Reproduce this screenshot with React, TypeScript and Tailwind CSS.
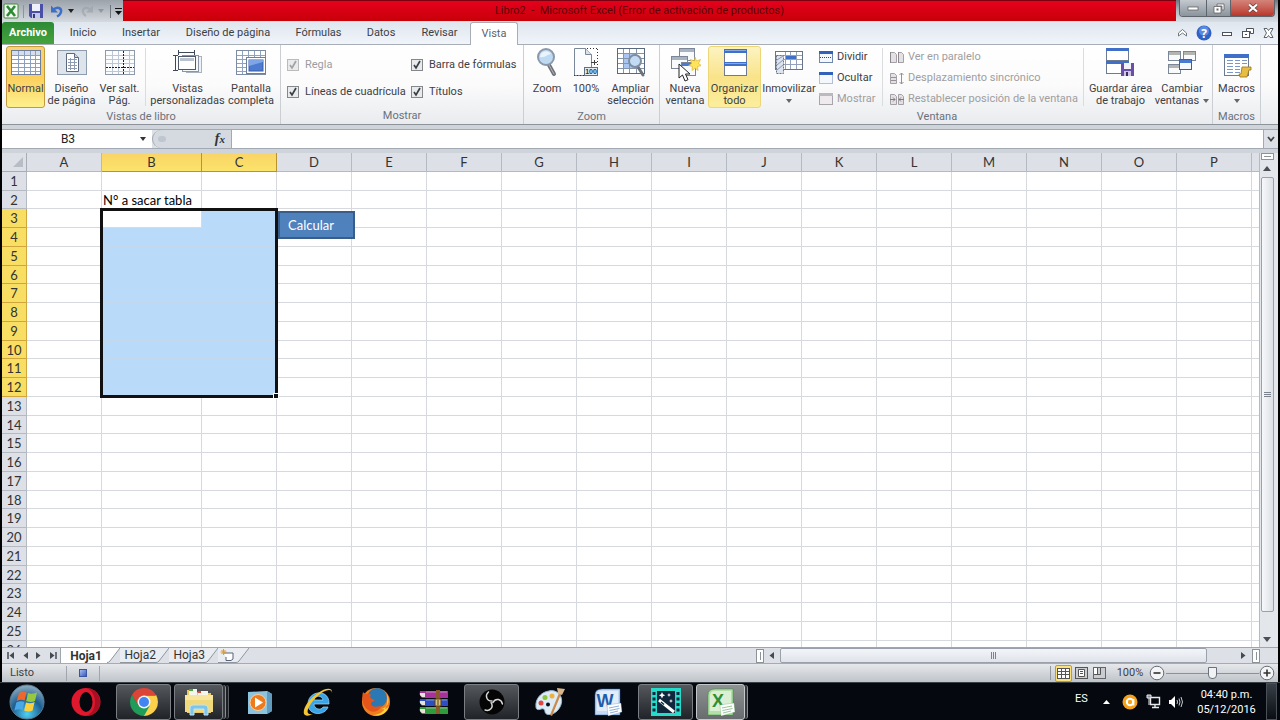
import { type ReactNode } from 'react'
import clsx from 'clsx'

// ============================================================
// Data
// ============================================================

const MENUS = [
  { label: 'Inicio', width: 'w-[56px]' },
  { label: 'Insertar', width: 'w-[60px]' },
  { label: 'Diseño de página', width: 'w-[114px]' },
  { label: 'Fórmulas', width: 'w-[67px]' },
  { label: 'Datos', width: 'w-[58px]' },
  { label: 'Revisar', width: 'w-[59px]' },
]

const COLUMNS = ['A', 'B', 'C', 'D', 'E', 'F', 'G', 'H', 'I', 'J', 'K', 'L', 'M', 'N', 'O', 'P']
const ROWS = Array.from({ length: 26 }, (_, i) => i + 1)

const isSelected = (col: string, row: number) => (col === 'B' || col === 'C') && row >= 3 && row <= 12

// ============================================================
// Ribbon icons
// ============================================================

function GridIcon() {
  return (
    <svg width="32" height="32" viewBox="0 0 32 32">
      <rect x="1.5" y="3.5" width="29" height="24" fill="#fff" stroke="#6d7f9b" />
      <rect x="2" y="4" width="28" height="4" fill="#d5deea" />
      <path d="M2 8.5h28M2 12.5h28M2 16.5h28M2 20.5h28M2 24.5h28M8.5 4v23M14.5 4v23M20.5 4v23M25.5 4v23" stroke="#8ba0c0" fill="none" />
    </svg>
  )
}

function PageLayoutIcon() {
  return (
    <svg width="32" height="32" viewBox="0 0 32 32">
      <rect x="1.5" y="3.5" width="29" height="24" fill="#dde4ec" stroke="#8e9cb0" />
      <path d="M10.5 6.5h8l4 4v14h-12z" fill="#fff" stroke="#5c6a80" />
      <path d="M18.5 6.5v4h4" fill="#c9d4e2" stroke="#5c6a80" />
      <path d="M12 12.5h9M12 15.5h9M12 18.5h9M12 21.5h9M14.5 11v12M18.5 11v12" stroke="#8d9cb4" />
    </svg>
  )
}

function PageBreakIcon() {
  return (
    <svg width="32" height="32" viewBox="0 0 32 32">
      <rect x="1.5" y="3.5" width="29" height="24" fill="#fbfcfd" stroke="#8e99ab" />
      <path d="M2 8.5h28M2 12.5h28M2 16.5h28M2 24.5h28M8.5 4v23M14.5 4v23M25.5 4v23" stroke="#bcc6d4" />
      <path d="M19.5 4v24M2 20.5h28" stroke="#222" strokeDasharray="2 1" />
    </svg>
  )
}

function CustomViewsIcon() {
  return (
    <svg width="32" height="32" viewBox="0 0 32 32">
      <rect x="14.5" y="9.5" width="15" height="16" fill="#eef1f5" stroke="#a8b2c0" />
      <rect x="10.5" y="8.5" width="16" height="16" fill="#f6f8fa" stroke="#8a95a6" />
      <rect x="6.5" y="9.5" width="17" height="13" fill="#fff" stroke="#4e5a6c" />
      <rect x="8" y="11" width="14" height="3" fill="#b9c2ce" />
      <path d="M6 5.5h17M6.5 3v5M22.5 3v5M3.5 9v14M1 8.5h5M1 23.5h5" stroke="#3f4858" />
    </svg>
  )
}

function FullScreenIcon() {
  return (
    <svg width="32" height="32" viewBox="0 0 32 32">
      <rect x="1.5" y="3.5" width="29" height="24" fill="#fff" stroke="#7c8ca4" />
      <path d="M2 8.5h28M2 12.5h28M2 16.5h28M2 20.5h28M2 24.5h28M7.5 4v23M13.5 4v23M19.5 4v23M25.5 4v23" stroke="#8fa2be" />
      <rect x="11.5" y="10.5" width="19" height="16" fill="#fff" stroke="#6c7f9f" />
      <rect x="14" y="13" width="14" height="11" fill="#4c7bd0" stroke="#3a5fa8" />
      <path d="M14 19l14-4v-2H14z" fill="#7fa5e6" />
    </svg>
  )
}

function MagnifierIcon() {
  return (
    <svg width="32" height="32" viewBox="0 0 32 32">
      <path d="M18 18l5 9" stroke="#6f7379" strokeWidth="4" strokeLinecap="round" />
      <path d="M18 18l5 9" stroke="#b3b7bd" strokeWidth="1" strokeLinecap="round" />
      <circle cx="15" cy="10" r="8" fill="#bedaf3" stroke="#8b98a9" strokeWidth="2" />
      <path d="M9 10a6 6 0 0 1 11-3c-3 0-6 4-11 3z" fill="#e9f4fd" />
    </svg>
  )
}

function HundredIcon() {
  return (
    <svg width="32" height="32" viewBox="0 0 32 32">
      <path d="M4.5 1.5h11l6 6v21h-17z" fill="#fbfcfe" stroke="#7a8798" />
      <path d="M15.5 1.5v6h6" fill="#d9e1ec" stroke="#7a8798" />
      <path d="M17 1.5h11M27.5 2v18M4 28.5h24" stroke="#333" strokeDasharray="1 2" />
      <path d="M21 15.5h6M24.5 13v5" stroke="#444" />
      <rect x="14.5" y="20.5" width="13" height="8" fill="#e8edf3" stroke="#5f6f86" />
      <text x="21" y="27" fontSize="7" fontWeight="700" textAnchor="middle" fontFamily="Liberation Sans, sans-serif" fill="#26354d">100</text>
    </svg>
  )
}

function ZoomSelectionIcon() {
  return (
    <svg width="32" height="32" viewBox="0 0 32 32">
      <rect x="2.5" y="1.5" width="27" height="25" fill="#fff" stroke="#59697f" />
      <rect x="9" y="6" width="12" height="15" fill="#a9c6f2" />
      <path d="M3 6.5h26M3 11.5h26M3 16.5h26M3 21.5h26M8.5 2v24M14.5 2v24M21.5 2v24" stroke="#8394ab" />
      <path d="M23 20l5 8" stroke="#6f7379" strokeWidth="3" strokeLinecap="round" />
      <circle cx="20" cy="14" r="6" fill="#c3dcf5" stroke="#7f8da1" strokeWidth="2" />
    </svg>
  )
}

function MiniWindow({ x, y, w, h, bar = '#a9b2bf' }: { x: number; y: number; w: number; h: number; bar?: string }) {
  return (
    <g>
      <rect x={x + 0.5} y={y + 0.5} width={w} height={h} fill="#f8fafc" stroke="#7b8799" />
      <rect x={x + 1} y={y + 1} width={w - 1} height="3" fill={bar} />
    </g>
  )
}

function NewWindowIcon() {
  return (
    <svg width="32" height="32" viewBox="0 0 32 32">
      <MiniWindow x={10} y={1} w={15} h={12} />
      <MiniWindow x={2} y={9} w={16} h={12} />
      <MiniWindow x={12} y={15} w={14} h={13} bar="#4a7ad0" />
      <path d="M26 10l1.5 4 4-1.5-2 4 3 2-4 1 .5 4-3-2.500-3 2.500.5-4-4-1 3-2-1-4 4 1.500z" fill="#ffe45a" stroke="#dcae1c" strokeWidth=".6" />
    </svg>
  )
}

function ArrangeIcon() {
  return (
    <svg width="32" height="32" viewBox="0 0 32 32">
      <rect x="5.5" y="2.5" width="22" height="13" fill="#fff" stroke="#6d7b92" />
      <rect x="5.5" y="15.5" width="22" height="13" fill="#fff" stroke="#6d7b92" />
      <rect x="5" y="2" width="23" height="4" fill="#3f6fc8" />
      <rect x="5" y="15" width="23" height="4" fill="#3f6fc8" />
      <path d="M6 3.5h21M6 16.5h21" stroke="#86aae8" />
    </svg>
  )
}

function FreezeIcon() {
  return (
    <svg width="32" height="32" viewBox="0 0 32 32">
      <rect x="2.5" y="4.5" width="27" height="18" fill="#fff" stroke="#66758c" />
      <path d="M4 8.5h25M4 12.5h25M4 17.5h25M12.5 5v17M17.5 5v17M23.5 5v17" stroke="#93a2b8" />
      <rect x="13" y="9" width="10" height="3" fill="#3f6fc8" />
      <path d="M3.5 8.5h7v18h-7z" fill="#dde4ed" stroke="#66758c" strokeDasharray="2 1" />
      <path d="M4 13l6-4M4 18l6-5M4 23l6-5" stroke="#8796ad" />
    </svg>
  )
}

function SaveWorkspaceIcon() {
  return (
    <svg width="32" height="32" viewBox="0 0 32 32">
      <rect x="1.5" y="1.5" width="22" height="12" fill="#fff" stroke="#6d7b92" />
      <rect x="1.5" y="14.5" width="22" height="12" fill="#fff" stroke="#6d7b92" />
      <rect x="1" y="1" width="23" height="3" fill="#3f6fc8" />
      <rect x="1" y="14" width="23" height="3" fill="#3f6fc8" />
      <rect x="16" y="16" width="13" height="13" fill="#6a4fa8" />
      <rect x="19" y="16" width="7" height="6" fill="#f3f1f8" />
      <rect x="19" y="24" width="7" height="5" fill="#cfc8e0" />
      <rect x="21" y="25" width="2" height="4" fill="#3c2c66" />
    </svg>
  )
}

function SwitchWindowsIcon() {
  return (
    <svg width="32" height="32" viewBox="0 0 32 32">
      <MiniWindow x={2} y={4} w={12} h={9} bar="#b4b4b0" />
      <MiniWindow x={17} y={4} w={12} h={9} bar="#b4b4b0" />
      <MiniWindow x={2} y={17} w={12} h={9} bar="#b4b4b0" />
      <rect x="13.5" y="12.5" width="12" height="10" fill="#f4f8ff" stroke="#3a5fa8" />
      <rect x="14" y="13" width="11" height="3" fill="#4a7ad0" />
    </svg>
  )
}

function MacrosIcon() {
  return (
    <svg width="32" height="32" viewBox="0 0 32 32">
      <rect x="3.5" y="7.5" width="24" height="21" fill="#fff" stroke="#6d7b92" />
      <rect x="3" y="7" width="25" height="4" fill="#3f6fc8" />
      <path d="M6 13.5h6M14 13.5h5M21 13.5h5M6 16.5h6M14 16.5h5M21 16.5h5M6 19.5h6M14 19.5h5M6 22.5h6M14 22.5h5M6 25.5h6M14 25.5h5" stroke="#7c97c6" />
      <path d="M21 20h9v3h-2l-2 7h-7l-1-3h2z" fill="#e8bd43" stroke="#9a7415" strokeWidth=".8" />
    </svg>
  )
}

function SplitIcon({ kind }: { kind: 'split' | 'hide' | 'show' }) {
  const off = kind === 'show'
  return (
    <svg width="16" height="14" viewBox="0 0 16 14">
      <rect x="1.5" y="1.5" width="13" height="11" fill={off ? '#eeeaee' : '#f4f8fd'} stroke={off ? '#a9a4a9' : '#6f86ad'} strokeDasharray={kind === 'hide' ? '1 1' : undefined} />
      <rect x="1" y="1" width="14" height="3" fill={off ? '#bdb8bd' : '#2f62b8'} />
      {kind === 'split' && <path d="M2 7.5h12" stroke="#445" strokeDasharray="1 1" />}
    </svg>
  )
}

function PagesIcon({ kind }: { kind: 'side' | 'sync' | 'reset' }) {
  return (
    <svg width="16" height="14" viewBox="0 0 16 14">
      <path d="M1.5 2.5h4l2 2v8h-6z" fill="#e4e1e4" stroke="#a5a0a5" />
      {kind !== 'sync' && <path d="M9.5 2.5h3l2 2v8h-5z" fill="#e4e1e4" stroke="#a5a0a5" />}
      {kind === 'side' && <path d="M1.5 2v11M9.5 2v11" stroke="#8d888d" />}
      {kind === 'sync' && <path d="M2 6.5h5M2 9.5h5M12.5 2v11M10.5 4l2-2 2 2M10.5 11l2 2 2-2" stroke="#959095" fill="none" />}
      {kind === 'reset' && <path d="M1 7.5h5M4 5.5l2 2-2 2M15 7.5h-5M12 5.5l-2 2 2 2" stroke="#807b80" fill="none" />}
    </svg>
  )
}

function Caret({ className = '' }: { className?: string }) {
  return (
    <svg width="6" height="4" viewBox="0 0 6 4" className={className}>
      <path d="M0 0h6L3 4z" fill="currentColor" />
    </svg>
  )
}

// ============================================================
// Ribbon pieces
// ============================================================

interface BigButtonProps {
  icon: ReactNode
  lines: string[]
  width: string
  active?: 'on' | 'hover'
  menu?: boolean
}

function BigButton({ icon, lines, width, active, menu }: BigButtonProps) {
  return (
    <button
      className={clsx(
        'flex h-[62px] shrink-0 flex-col items-center rounded-[3px] border whitespace-nowrap',
        width,
        !active && 'border-transparent',
        active === 'on' && 'border-[#c39a3c] bg-linear-to-b from-[#f8d27a] via-[#fbcf5c] to-[#fdf08c]',
        active === 'hover' && 'border-[#ecd678] bg-linear-to-b from-[#fdf3c0] via-[#f9e38a] to-[#fbee9c]',
      )}
    >
      <span className="mb-1 h-[32px]">{icon}</span>
      {lines.map((line, i) => (
        <span key={line} className="flex items-center gap-1 leading-[12px]">
          {line}
          {menu && i === 1 && <Caret className="text-[#666]" />}
        </span>
      ))}
      {menu && lines.length === 1 && <Caret className="mt-1 text-[#666]" />}
    </button>
  )
}

function Group({ label, children, className }: { label: string; children: ReactNode; className?: string }) {
  return (
    <section className={clsx('flex shrink-0 flex-col border-r border-[#cbced3] pt-px', className)}>
      <div className="flex h-[62px]">{children}</div>
      <h2 className="pt-px text-center leading-[16px] text-[#6a717b]">{label}</h2>
    </section>
  )
}

function Separator({ className = '' }: { className?: string }) {
  return <span className={clsx('my-[2px] w-px shrink-0 bg-[#dadcdf]', className)} />
}

function CheckBox({ label, disabled }: { label: string; disabled?: boolean }) {
  return (
    <label className={clsx('flex items-center gap-[6px] whitespace-nowrap', disabled && 'text-[#9b9da1]')}>
      <span className="relative size-[12px]">
        <input
          type="checkbox"
          defaultChecked
          disabled={disabled}
          className="block size-[12px] appearance-none border border-[#84878c] bg-[#e8eaec] disabled:border-[#bbb]"
        />
        <svg viewBox="0 0 12 12" className="pointer-events-none absolute inset-0">
          <path d="M3 6l2 3 4-7" stroke={disabled ? '#a2a2a2' : '#3c3f44'} strokeWidth="1.7" fill="none" />
        </svg>
      </span>
      {label}
    </label>
  )
}

function SmallButton({ icon, label, disabled }: { icon: ReactNode; label: string; disabled?: boolean }) {
  return (
    <button disabled={disabled} className="flex h-[21px] items-center gap-[3px] whitespace-nowrap disabled:text-[#a09ea0]">
      {icon}
      {label}
    </button>
  )
}

// ============================================================
// Title bar + menu tabs
// ============================================================

function TitleBar() {
  return (
    <header className="flex h-[22px] bg-linear-to-b from-[#6d757d] via-[#b3bac2] to-[#d9dfe6]">
      <div className="flex w-[121px] shrink-0 items-center bg-linear-to-b from-[#9ba2a9] to-[#d5dae0] pl-[1px]">
        <svg width="16" height="16" viewBox="0 0 16 16">
          <rect x="1" y="1" width="14" height="14" rx="1" fill="#f2f8f0" stroke="#3f8a3a" />
          <path d="M4 3l8 10M12 3L4 13" stroke="#2d8a34" strokeWidth="2.600" />
        </svg>
        <span className="mx-[4px] h-[13px] w-px bg-[#8d949c]" />
        <button aria-label="Guardar" className="mr-[6px]">
          <svg width="16" height="16" viewBox="0 0 16 16">
            <path d="M1 1h14v14H3l-2-2z" fill="#4a50a8" />
            <rect x="4" y="1" width="8" height="7" fill="#eef0fb" />
            <rect x="4" y="10" width="8" height="5" fill="#c4c8e8" />
            <rect x="5" y="11" width="2" height="4" fill="#34397c" />
          </svg>
        </button>
        <button aria-label="Deshacer" className="flex items-center gap-[4px]">
          <svg width="14" height="14" viewBox="0 0 14 14">
            <path d="M3 6c4-4 9-2 8 2-.4 2-2 3.500-4 4.500" stroke="#3d6fc6" strokeWidth="2.400" fill="none" />
            <path d="M1 1.500v7h7z" fill="#3d6fc6" />
          </svg>
          <Caret className="text-[#222]" />
        </button>
        <button aria-label="Rehacer" className="ml-[6px] flex items-center gap-[4px] opacity-60">
          <svg width="14" height="14" viewBox="0 0 14 14">
            <path d="M11 6C7 2 2 4 3 8c.4 2 1 3 3 4" stroke="#9aa0a7" strokeWidth="2.200" fill="none" />
            <path d="M13 1.500v7H6z" fill="#9aa0a7" />
          </svg>
          <Caret className="text-[#7b8188]" />
        </button>
        <span className="mr-[4px] ml-[6px] h-[13px] w-px bg-[#6d747c]" />
        <button aria-label="Personalizar">
          <svg width="7" height="7" viewBox="0 0 7 7">
            <path d="M0 .5h7" stroke="#111" />
            <path d="M0 3h7L3.500 7z" fill="#111" />
          </svg>
        </button>
      </div>

      <h1 className="mb-px flex-1 border-t border-[#7a0010] bg-linear-to-b from-[#e6001c] to-[#c80008] pr-[20px] text-center text-[11px] leading-[20px] whitespace-pre text-[#5c0208]">
        Libro2  -  Microsoft Excel (Error de activación de productos)
      </h1>

      <div className="ml-[3px] flex h-[17px] shrink-0 overflow-hidden rounded-b-[4px] border border-t-0 border-[#5d646c]">
        <button aria-label="Minimizar" className="flex w-[26px] items-center justify-center bg-linear-to-b from-[#c3c9cf] to-[#8b939c]">
          <svg width="12" height="5" viewBox="0 0 12 5">
            <rect x="1" y="1" width="10" height="3" fill="#fff" stroke="#555" strokeWidth=".7" />
          </svg>
        </button>
        <button aria-label="Restaurar" className="flex w-[25px] items-center justify-center border-x border-[#5d646c] bg-linear-to-b from-[#c3c9cf] to-[#8b939c]">
          <svg width="12" height="11" viewBox="0 0 12 11">
            <path d="M4 1h7v6H9V3H4z" fill="#fff" stroke="#555" strokeWidth=".7" />
            <path d="M1 3.500h7v6.500H1z" fill="#fff" stroke="#555" strokeWidth=".7" />
            <rect x="3.500" y="5.500" width="2" height="2" fill="#666" />
          </svg>
        </button>
        <button aria-label="Cerrar" className="flex w-[43px] items-center justify-center bg-linear-to-b from-[#d4837a] to-[#b8352a]">
          <svg width="12" height="10" viewBox="0 0 12 10">
            <path d="M2 1.500l8 7M10 1.500l-8 7" stroke="#5a3a3a" strokeWidth="3.600" />
            <path d="M2 1.500l8 7M10 1.500l-8 7" stroke="#fff" strokeWidth="2.300" />
          </svg>
        </button>
      </div>
      <span className="w-[3px] shrink-0" />
    </header>
  )
}

function MenuTabs() {
  return (
    <nav className="flex h-[23px] items-end border-b border-[#a8aeb7] bg-linear-to-b from-[#dfe6ee] to-[#f1f5fa] text-[#3b3f45]">
      <button className="h-full w-[52px] rounded-t-[3px] bg-linear-to-b from-[#2c8a35] to-[#45a33e] font-bold text-white">Archivo</button>
      <span className="w-px" />
      {MENUS.map(m => (
        <button key={m.label} className={clsx('h-full text-center whitespace-nowrap', m.width)}>
          {m.label}
        </button>
      ))}
      <span className="w-px" />
      <button className="-mb-px h-[23px] w-[48px] rounded-t-[3px] border border-b-0 border-[#a8aeb7] bg-white text-[#5a6470]">Vista</button>
      <div className="ml-auto flex h-full items-center gap-[9px] pr-[4px]">
        <button aria-label="Minimizar cinta">
          <svg width="9" height="8" viewBox="0 0 9 8">
            <path d="M.5 4l4-3.500 4 3.500v3l-4-3-4 3z" fill="#fff" stroke="#555b63" strokeWidth=".8" />
          </svg>
        </button>
        <button aria-label="Ayuda">
          <svg width="16" height="16" viewBox="0 0 16 16">
            <circle cx="8" cy="8" r="7.500" fill="#2f62c4" />
            <circle cx="8" cy="6" r="5" fill="#5a8ae0" />
            <text x="8" y="12.500" fontSize="12" fontWeight="700" textAnchor="middle" fontFamily="Open Sans, sans-serif" fill="#fff">?</text>
          </svg>
        </button>
        <button aria-label="Minimizar libro">
          <svg width="12" height="12" viewBox="0 0 12 12">
            <rect x="1.500" y="5.500" width="9" height="3" fill="#fff" stroke="#4c535c" />
          </svg>
        </button>
        <button aria-label="Restaurar libro">
          <svg width="12" height="12" viewBox="0 0 12 12">
            <path d="M4.500 1.500h7v5h-3v-2h-4z" fill="#fff" stroke="#4c535c" />
            <rect x=".5" y="4.500" width="7" height="6" fill="#fff" stroke="#4c535c" />
            <rect x="3" y="7" width="2" height="1" fill="#4c535c" />
          </svg>
        </button>
        <button aria-label="Cerrar libro">
          <svg width="11" height="10" viewBox="0 0 11 10">
            <path d="M1 .5h3l1.500 2 1.500-2h3L7.500 5 10 9.500H7l-1.500-2-1.500 2H1L3.500 5z" fill="#fff" stroke="#4c535c" strokeWidth=".9" />
          </svg>
        </button>
      </div>
    </nav>
  )
}

// ============================================================
// Ribbon
// ============================================================

function Ribbon() {
  return (
    <div className="flex h-[80px] border-b border-[#8d939b] bg-linear-to-b from-white via-[#fbfbfc] to-[#e9ebee] text-[#3d4045]">
      <Group label="Vistas de libro" className="w-[279px] px-[4px]">
        <BigButton icon={<GridIcon />} lines={['Normal']} width="w-[39px]" active="on" />
        <BigButton icon={<PageLayoutIcon />} lines={['Diseño', 'de página']} width="w-[53px]" />
        <BigButton icon={<PageBreakIcon />} lines={['Ver salt.', 'Pág.']} width="w-[43px]" />
        <Separator className="mx-[4px]" />
        <BigButton icon={<CustomViewsIcon />} lines={['Vistas', 'personalizadas']} width="w-[75px]" />
        <BigButton icon={<FullScreenIcon />} lines={['Pantalla', 'completa']} width="w-[52px]" />
      </Group>

      <Group label="Mostrar" className="w-[243px]">
        <div className="grid grid-cols-[124px_1fr] content-start gap-y-[11px] pt-[11px] pl-[6px]">
          <CheckBox label="Regla" disabled />
          <CheckBox label="Barra de fórmulas" />
          <CheckBox label="Líneas de cuadrícula" />
          <CheckBox label="Títulos" />
        </div>
      </Group>

      <Group label="Zoom" className="w-[136px] px-[3px]">
        <BigButton icon={<MagnifierIcon />} lines={['Zoom']} width="w-[40px]" />
        <BigButton icon={<HundredIcon />} lines={['100%']} width="w-[38px]" />
        <BigButton icon={<ZoomSelectionIcon />} lines={['Ampliar', 'selección']} width="w-[51px]" />
      </Group>

      <Group label="Ventana" className="w-[553px] pl-[2px]">
        <div className="relative">
          <BigButton icon={<NewWindowIcon />} lines={['Nueva', 'ventana']} width="w-[46px]" />
          <svg width="13" height="19" viewBox="0 0 13 19" className="pointer-events-none absolute top-[17px] left-[16px]">
            <path d="M1 1v14l3.500-3 2.500 6 3-1.300L7.500 11H12z" fill="#fff" stroke="#222" />
          </svg>
        </div>
        <BigButton icon={<ArrangeIcon />} lines={['Organizar', 'todo']} width="w-[53px]" active="hover" />
        <BigButton icon={<FreezeIcon />} lines={['Inmovilizar']} width="w-[56px]" menu />
        <div className="ml-px w-[62px] shrink-0">
          <SmallButton icon={<SplitIcon kind="split" />} label="Dividir" />
          <SmallButton icon={<SplitIcon kind="hide" />} label="Ocultar" />
          <SmallButton icon={<SplitIcon kind="show" />} label="Mostrar" disabled />
        </div>
        <Separator className="mr-[6px] ml-[2px]" />
        <div className="w-[194px] shrink-0">
          <SmallButton icon={<PagesIcon kind="side" />} label="Ver en paralelo" disabled />
          <SmallButton icon={<PagesIcon kind="sync" />} label="Desplazamiento sincrónico" disabled />
          <SmallButton icon={<PagesIcon kind="reset" />} label="Restablecer posición de la ventana" disabled />
        </div>
        <Separator className="mr-[3px]" />
        <BigButton icon={<SaveWorkspaceIcon />} lines={['Guardar área', 'de trabajo']} width="w-[67px]" />
        <BigButton icon={<SwitchWindowsIcon />} lines={['Cambiar', 'ventanas']} width="w-[56px]" menu />
      </Group>

      <Group label="Macros" className="w-[48px] items-center">
        <BigButton icon={<MacrosIcon />} lines={['Macros']} width="w-[44px]" menu />
      </Group>
    </div>
  )
}

// ============================================================
// Formula bar
// ============================================================

function FormulaBar() {
  return (
    <div className="my-[4px] flex h-[20px] border-y border-[#a3a9b3] bg-[#dde1e7] text-[12px] text-[#222]">
      <input aria-label="Cuadro de nombres" defaultValue="B3" className="w-[132px] bg-white text-center" />
      <button aria-label="Nombres" className="flex w-[18px] items-center justify-center bg-white">
        <Caret className="text-[#333]" />
      </button>
      <div className="flex w-[79px] items-center justify-between rounded-l-full border-l border-[#a3a9b3] bg-[#d5dae1] pr-[6px] pl-[5px]">
        <span className="h-[6px] w-[8px] rounded-full bg-[#c0c6cf]" />
        <button aria-label="Insertar función" className="font-['Liberation_Serif',serif] text-[14px] leading-[16px] font-bold text-[#333] italic">
          f<span className="text-[11px]">x</span>
        </button>
      </div>
      <input aria-label="Barra de fórmulas" className="min-w-0 flex-1 border-l border-[#a3a9b3] bg-white px-1" />
      <button aria-label="Expandir" className="flex w-[15px] items-center justify-center border-l border-[#a3a9b3]">
        <svg width="8" height="6" viewBox="0 0 8 6">
          <path d="M1 1l3 3.500L7 1" stroke="#444" strokeWidth="1.800" fill="none" />
        </svg>
      </button>
    </div>
  )
}

// ============================================================
// Sheet
// ============================================================

function Sheet() {
  return (
    <div className="relative min-w-0 flex-1 overflow-hidden bg-white font-[Lato,sans-serif] text-[13px] leading-[16px]">
      <table className="w-full table-fixed border-separate border-spacing-0">
        <colgroup>
          <col className="w-[25px]" />
          {COLUMNS.map(c => (
            <col key={c} className={c === 'B' ? 'w-[100px]' : 'w-[75px]'} />
          ))}
          <col />
        </colgroup>
        <thead>
          <tr className="h-[19px]">
            <th className="border-r border-b border-[#a7adb7] bg-[#dde0e6] p-0">
              <svg width="10" height="10" viewBox="0 0 10 10" className="mr-[3px] ml-auto">
                <path d="M10 0v10H0z" fill="#b8bdc5" />
              </svg>
            </th>
            {COLUMNS.map(c => (
              <th
                key={c}
                className={clsx(
                  'border-r border-b p-0 font-normal text-[#333]',
                  c === 'B' || c === 'C'
                    ? 'border-[#b5952f] bg-linear-to-b from-[#f9d467] to-[#fbe36a]'
                    : 'border-[#b4b9c2] bg-[#dde0e6]',
                )}
              >
                {c}
              </th>
            ))}
            <th className="border-b border-[#b4b9c2] bg-[#dde0e6] p-0" />
          </tr>
        </thead>
        <tbody>
          {ROWS.map(r => (
            <tr key={r} className={r % 4 === 2 ? 'h-[18px]' : 'h-[19px]'}>
              <th
                className={clsx(
                  'border-r border-b p-0 font-normal text-[#333]',
                  r >= 3 && r <= 12 ? 'border-[#cfa63c] bg-[#f8de62]' : 'border-[#b4b9c2] bg-[#dde0e6]',
                )}
              >
                {r}
              </th>
              {COLUMNS.map(c => (
                <td
                  key={c}
                  className={clsx(
                    'border-r border-b p-0 whitespace-nowrap text-black',
                    isSelected(c, r) && !(c === 'B' && r === 3) ? 'border-[#c3d8ec] bg-[#b9daf8]' : 'border-[#d6d9dd]',
                  )}
                >
                  {c === 'B' && r === 2 && <span className="block pl-px">N° a sacar tabla</span>}
                </td>
              ))}
              <td className="border-b border-[#d6d9dd] p-0" />
            </tr>
          ))}
        </tbody>
      </table>

      {/* Selection frame with its fill handle */}
      <div className="pointer-events-none absolute top-[55px] left-[98px] h-[190px] w-[178px] border-[3px] border-[#111]">
        <span className="absolute -right-[4px] -bottom-[4px] size-[6px] border border-white bg-[#111]" />
      </div>

      <button className="absolute top-[58px] left-[276px] h-[28px] w-[77px] border-2 border-[#385d8a] bg-[#4f81bd] pl-[8px] text-left text-[13px] text-white">
        Calcular
      </button>
    </div>
  )
}

function VerticalScroll() {
  return (
    <div className="flex w-[15px] shrink-0 flex-col items-center border-l border-[#b4b9c2] bg-[#e3e6eb]">
      <span className="flex h-[7px] w-[13px] items-center border border-[#8d939b] bg-white px-[2px]">
        <span className="h-px w-full bg-[#8d939b]" />
      </span>
      <button aria-label="Subir" className="flex h-[17px] items-center">
        <svg width="8" height="5" viewBox="0 0 8 5">
          <path d="M0 5h8L4 0z" fill="#4a4f57" />
        </svg>
      </button>
      <div className="flex w-[13px] flex-1 flex-col items-center justify-center gap-[1px] rounded-[2px] border border-[#9aa1ab] bg-linear-to-r from-[#f7f8fa] to-[#dce0e6]">
        <span className="h-px w-[7px] bg-[#7d838c]" />
        <span className="h-px w-[7px] bg-[#7d838c]" />
        <span className="h-px w-[7px] bg-[#7d838c]" />
      </div>
      <span className="h-[19px]" />
      <button aria-label="Bajar" className="flex h-[16px] items-center">
        <svg width="8" height="5" viewBox="0 0 8 5">
          <path d="M0 0h8L4 5z" fill="#4a4f57" />
        </svg>
      </button>
    </div>
  )
}

// ============================================================
// Sheet tabs + horizontal scroll
// ============================================================

function Slant({ left }: { left: string }) {
  return (
    <svg width="13" height="15" viewBox="0 0 13 15" className="shrink-0">
      <path d="M0 0h13L3 13q-1 1.500-3 1.500z" fill={left} />
      <path d="M13 0L3 13q-1 1.500-3 1.500" stroke="#8f96a0" fill="none" />
    </svg>
  )
}

function NavArrow({ flip, end, label }: { flip?: boolean; end?: boolean; label: string }) {
  return (
    <button aria-label={label} className={clsx('flex w-[14px] justify-center', flip && '-scale-x-100')}>
      <svg width="8" height="7" viewBox="0 0 8 7">
        <path d="M7 0v7L2.500 3.500z" fill="#444a52" />
        {end && <path d="M1 0v7" stroke="#444a52" strokeWidth="1.500" />}
      </svg>
    </button>
  )
}

function SheetTabs() {
  return (
    <div className="flex h-[16px] items-stretch border-t border-[#a0a6af] bg-[#dde1e7] text-[12px] text-[#333]">
      <div className="flex w-[59px] items-center border-r border-[#a0a6af] pl-[2px]">
        <NavArrow label="Primera hoja" end />
        <NavArrow label="Hoja anterior" />
        <NavArrow label="Hoja siguiente" flip />
        <NavArrow label="Última hoja" flip end />
      </div>
      <button className="w-[46px] bg-white pl-[4px] text-center leading-[14px] font-bold">Hoja1</button>
      <Slant left="#ffffff" />
      <button className="w-[36px] border-b border-[#8f96a0] bg-[#e9ecf0] text-right leading-[14px]">Hoja2</button>
      <Slant left="#e9ecf0" />
      <button className="w-[36px] border-b border-[#8f96a0] bg-[#e9ecf0] text-right leading-[14px]">Hoja3</button>
      <Slant left="#e9ecf0" />
      <button aria-label="Insertar hoja" className="flex w-[18px] items-center justify-center border-b border-[#8f96a0] bg-[#e9ecf0]">
        <svg width="14" height="12" viewBox="0 0 14 12">
          <path d="M4 4h9v6l-2 1.500H6V8" fill="#fff" stroke="#56627a" />
          <path d="M3.500 0v6M.5 3h6M1.500 1l4 4M5.500 1l-4 4" stroke="#e29a2a" />
        </svg>
      </button>
      <Slant left="#e9ecf0" />

      <div className="ml-auto flex w-[504px] items-center">
        <span className="flex h-[14px] w-[8px] items-center justify-center border border-[#8d939b] bg-white">
          <span className="h-[8px] w-px bg-[#8d939b]" />
        </span>
        <NavArrow label="Izquierda" />
        <div className="ml-[2px] flex h-[15px] w-[427px] items-center justify-center gap-[1px] rounded-[2px] border border-[#9aa1ab] bg-linear-to-b from-[#f3f5f8] to-[#dfe3ea]">
          <span className="h-[7px] w-px bg-[#7d838c]" />
          <span className="h-[7px] w-px bg-[#7d838c]" />
          <span className="h-[7px] w-px bg-[#7d838c]" />
        </div>
        <span className="w-[30px]" />
        <NavArrow label="Derecha" flip />
        <span className="ml-auto flex h-[14px] w-[8px] items-center justify-center border border-[#8d939b] bg-white">
          <span className="h-[8px] w-px bg-[#8d939b]" />
        </span>
      </div>
      <span className="w-[18px]" />
    </div>
  )
}

// ============================================================
// Status bar
// ============================================================

function StatusBar() {
  return (
    <footer className="flex h-[19px] items-center border-t border-[#a6abb3] bg-linear-to-b from-[#e6e8eb] to-[#bfc4ca] text-[#3d4045]">
      <span className="w-[64px] pl-[8px]">Listo</span>
      <span className="flex h-[15px] w-[34px] items-center justify-center border-x border-[#a1a6ae]">
        <span className="size-[8px] border border-[#3b55a5] bg-linear-to-br from-[#a8bdf0] to-[#3a5cbc]" />
      </span>
      <div className="ml-auto flex h-full items-center">
        <span className="mr-[4px] h-[14px] w-px bg-[#9298a1]" />
        <button aria-label="Normal" className="flex size-[17px] items-center justify-center rounded-[2px] border border-[#c49b2c] bg-[#fce27c]">
          <svg width="13" height="11" viewBox="0 0 13 11">
            <rect x=".5" y=".5" width="12" height="10" fill="#fff" stroke="#555" />
            <path d="M1 3.500h11M1 6.500h11M4.500 1v9M8.500 1v9" stroke="#555" />
          </svg>
        </button>
        <button aria-label="Diseño de página" className="flex w-[18px] justify-center">
          <svg width="13" height="12" viewBox="0 0 13 12">
            <rect x=".5" y=".5" width="12" height="11" fill="#c9cdd2" stroke="#555" />
            <path d="M3.500 2.500h6v7h-6zM5 4.500h3M5 6.500h3" fill="#fff" stroke="#555" />
          </svg>
        </button>
        <button aria-label="Ver salto de página" className="flex w-[18px] justify-center">
          <svg width="13" height="12" viewBox="0 0 13 12">
            <rect x=".5" y=".5" width="12" height="11" fill="#c9cdd2" stroke="#666" />
            <path d="M1 7.500h6.500V1M4.500 1v6" fill="none" stroke="#555" />
            <path d="M1 1h3v6H1z" fill="#fff" />
          </svg>
        </button>
        <button className="w-[40px] pl-[4px] text-center">100%</button>
        <button aria-label="Alejar" className="mx-[1px]">
          <svg width="16" height="16" viewBox="0 0 16 16">
            <circle cx="8" cy="8" r="6.800" fill="#f4f5f6" stroke="#666c74" />
            <path d="M4.500 8h7" stroke="#333" strokeWidth="1.600" />
          </svg>
        </button>
        <input
          type="range"
          aria-label="Zoom"
          defaultValue={50}
          className="h-[14px] w-[93px] appearance-none bg-[linear-gradient(#8b919a,#8b919a)] bg-[length:100%_1px] bg-center bg-no-repeat [&::-webkit-slider-thumb]:h-[12px] [&::-webkit-slider-thumb]:w-[9px] [&::-webkit-slider-thumb]:appearance-none [&::-webkit-slider-thumb]:rounded-b-[4px] [&::-webkit-slider-thumb]:border [&::-webkit-slider-thumb]:border-[#6b717a] [&::-webkit-slider-thumb]:bg-[#f1f2f4]"
        />
        <button aria-label="Acercar">
          <svg width="16" height="16" viewBox="0 0 16 16">
            <circle cx="8" cy="8" r="6.800" fill="#f4f5f6" stroke="#666c74" />
            <path d="M4.500 8h7M8 4.500v7" stroke="#333" strokeWidth="1.600" />
          </svg>
        </button>
        <span className="w-[3px]" />
      </div>
    </footer>
  )
}

// ============================================================
// Taskbar icons
// ============================================================

function WindowsOrb() {
  return (
    <svg width="36" height="36" viewBox="0 0 36 36">
      <defs>
        <radialGradient id="orb" cx=".5" cy=".85" r=".9">
          <stop offset="0" stopColor="#4fd0f5" />
          <stop offset=".5" stopColor="#1d5f92" />
          <stop offset="1" stopColor="#9fb9c9" />
        </radialGradient>
      </defs>
      <circle cx="18" cy="18" r="17" fill="url(#orb)" stroke="#5d7d90" />
      <path d="M10 9c3-2 5-1.500 7.500-.5l-1.800 8c-2.500-1-5-1-8 .5z" fill="#f0672c" />
      <path d="M19 9c2.500 1 5 1 9-.5l-2 8.500c-3 1.500-6 1-8.800 0z" fill="#96c93e" />
      <path d="M7.300 18.500c3-1.500 5.500-1.500 8-.5l-1.800 8c-2.500-1-5-1-8 .5z" fill="#4aa8e8" />
      <path d="M17 18.500c2.500 1 5.500 1 8.600-.5l-2 8.500c-3 1.500-6 1-8.500 0z" fill="#fcd03a" />
    </svg>
  )
}

function OperaIcon() {
  return (
    <svg width="30" height="30" viewBox="0 0 30 30">
      <ellipse cx="15" cy="15" rx="14.500" ry="14" fill="#e0182d" />
      <path d="M15 1a14 14 0 0 1 0 28c6-2 9-8 9-14S21 3 15 1z" fill="#a90f22" />
      <ellipse cx="15" cy="15" rx="6.500" ry="10" fill="#05090e" />
    </svg>
  )
}

function ChromeIcon() {
  return (
    <svg width="28" height="28" viewBox="0 0 28 28">
      <path d="M14 14l12.100-7A14 14 0 0 1 14 28z" fill="#fcd04a" />
      <path d="M14 7.500h12.400L20 17l-6 11V14z" fill="#fcd04a" />
      <path d="M1.900 7l6.500 11L14 14V7.500h12.300A14 14 0 0 0 1.900 7z" fill="#dc4437" />
      <path d="M1.900 7A14 14 0 0 0 14 28l5.600-10L14 14l-5.600 3.500z" fill="#1f9d58" />
      <circle cx="14" cy="14" r="6.500" fill="#f4f4f4" />
      <circle cx="14" cy="14" r="5" fill="#4384f3" />
    </svg>
  )
}

function ExplorerIcon() {
  return (
    <svg width="32" height="30" viewBox="0 0 32 30">
      <path d="M4 3h9l2 3h13v20H4z" fill="#e9c95f" />
      <rect x="6" y="2" width="8" height="6" fill="#f5f5ee" />
      <rect x="6" y="2" width="4" height="2" fill="#4bab43" />
      <rect x="15" y="4" width="10" height="5" fill="#f5f5ee" />
      <rect x="15" y="4" width="3" height="2" fill="#d84a35" />
      <path d="M2 8h28v17H2z" fill="#f6e59a" />
      <path d="M2 13h28v12H2z" fill="#f0d97c" />
      <path d="M7 28v-7q0-3 3-3h12q3 0 3 3v7h-4v-6H11v6z" fill="#7ec5ea" stroke="#bfe4f7" />
    </svg>
  )
}

function MediaPlayerIcon() {
  return (
    <svg width="28" height="26" viewBox="0 0 28 26">
      <path d="M2 3l19-1 5 3v17l-5 3H2z" fill="#8cc4e0" />
      <path d="M21 2l5 3v17l-5 3z" fill="#5f9cc0" />
      <circle cx="12" cy="13.500" r="8" fill="#ef7a1c" stroke="#fbd0a0" />
      <path d="M9 8.500v10l8-5z" fill="#fff" />
    </svg>
  )
}

function ExplorerEIcon() {
  return (
    <svg width="32" height="30" viewBox="0 0 32 30">
      <path d="M27 17H12c0 5 7 7 9 3h5c-3 9-19 9-20-2C5 3 28 1 27 17zM12 13h9c-1-5-8-5-9 0z" fill="#37a5e8" stroke="#a7dbf8" strokeWidth=".7" />
      <path d="M30 6c1-6-7-5-14 0C5 13-1 25 3 28c2 1.500 6 0 8-1-5 1-7-1-4-7C11 12 21 3 27 3c2 0 3 1 3 3z" fill="#f4c534" />
    </svg>
  )
}

function FirefoxIcon() {
  return (
    <svg width="30" height="30" viewBox="0 0 30 30">
      <circle cx="15" cy="15" r="14" fill="#f07d1e" />
      <circle cx="16" cy="11" r="10" fill="#2a78b4" />
      <path d="M26 7c4 8 0 14-6 15 4 1 7-1 8-3-2 8-10 11-17 9 10 0 17-6 15-21z" fill="#fbd23c" />
      <path d="M2 5c1 1 2 1.500 4 2 2-1 3 0 4 1-2 2 0 4 4 5-2 2-4 2-4 4 1 4 8 3 10 1 0 5-6 8-11 6C2 21 0 12 2 5z" fill="#e4551c" />
    </svg>
  )
}

function WinrarIcon() {
  const books = ['#a8329c', '#2c4fc4', '#2f9c3c']
  return (
    <svg width="32" height="26" viewBox="0 0 32 26">
      {books.map((c, i) => (
        <g key={c}>
          <path d={`M2 ${2 + i * 8}h28v7H4q-3-3-2-7z`} fill={c} />
          <path d={`M2 ${4 + i * 8}h5v4H4q-3-2-2-4z`} fill="#e8e4dc" />
          <path d={`M8 ${3 + i * 8}h21`} stroke="#fff" strokeOpacity=".4" />
        </g>
      ))}
      <rect x="18" y="1" width="4" height="24" fill="#8a5a2c" />
      <rect x="17" y="10" width="6" height="7" fill="#d9c27c" stroke="#5d3c14" />
      <path d="M20 11v5" stroke="#5d3c14" />
    </svg>
  )
}

function ObsIcon() {
  return (
    <svg width="26" height="26" viewBox="0 0 26 26">
      <circle cx="13" cy="13" r="12.500" fill="#050505" />
      <g fill="none" stroke="#d8d8d8" strokeWidth="1.500" strokeLinecap="round">
        <path d="M13 12c-6 0-7-6-3.500-9" />
        <path d="M13 12c-6 0-7-6-3.500-9" transform="rotate(120 13 13)" />
        <path d="M13 12c-6 0-7-6-3.500-9" transform="rotate(240 13 13)" />
      </g>
    </svg>
  )
}

function PaintIcon() {
  return (
    <svg width="32" height="30" viewBox="0 0 32 30">
      <path d="M15 4C7 5 1 12 2 20c0 3 3 3 5 2 3-1 4 1 4 3 1 4 8 3 12-1 6-6 6-14 1-18-2-2-6-3-9-2z" fill="#dcebf6" stroke="#9bbbd3" />
      <circle cx="7" cy="16" r="2.500" fill="#e0483f" />
      <circle cx="11" cy="10.500" r="2.500" fill="#8cc63f" />
      <circle cx="18" cy="9" r="2.500" fill="#f0b03a" />
      <circle cx="14" cy="17.500" r="2" fill="#0a1017" />
      <path d="M25 6l2 1-9 22-2-1z" fill="#c98a4c" />
      <path d="M23 1l8 1-3 6-4-1.500z" fill="#d8b58a" />
    </svg>
  )
}

function OfficeIcon({ letter, dark, light }: { letter: string; dark: string; light: string }) {
  return (
    <svg width="30" height="30" viewBox="0 0 30 30">
      <path d="M2 8q0-6 7-6h18v26H2z" fill={light} stroke={dark} strokeOpacity=".5" />
      <path d="M9 4h16v20H4V9q0-5 5-5z" fill="#fff" fillOpacity=".5" />
      <text x="12" y="20" fontSize="18" fontWeight="700" textAnchor="middle" fontFamily="Liberation Sans, sans-serif" fill={dark}>{letter}</text>
      <path d="M14 18l14-2 1 9-14 4z" fill="#fff" stroke={dark} strokeOpacity=".4" strokeWidth=".6" />
      <path d="M16 21l10-2M16.500 23.500l10-2M17 26l8-2" stroke={dark} strokeOpacity=".5" />
    </svg>
  )
}

function MovieIcon() {
  return (
    <svg width="30" height="28" viewBox="0 0 30 28">
      <rect width="30" height="28" fill="#25dccb" />
      <rect x="6" y="3" width="18" height="22" fill="#10263c" />
      <path d="M1.500 4h3v3h-3zM1.500 9.500h3v3h-3zM1.500 15h3v3h-3zM1.500 20.500h3v3h-3zM25.500 4h3v3h-3zM25.500 9.500h3v3h-3zM25.500 15h3v3h-3zM25.500 20.500h3v3h-3z" fill="#10263c" />
      <path d="M8 12l15 12" stroke="#fff" strokeWidth="3" />
      <path d="M10 14l3 2.500" stroke="#10263c" strokeWidth="1.500" />
      <path d="M11 4l1 2.200 2.200 1-2.200 1-1 2.200-1-2.200-2.200-1 2.200-1zM18 5l.6 1.400L20 7l-1.400.6L18 9l-.6-1.400L16 7l1.400-.6zM20 11l.6 1.400 1.400.6-1.400.6-.6 1.400-.6-1.400L18 13l1.400-.6z" fill="#fff" />
    </svg>
  )
}

// ============================================================
// Taskbar
// ============================================================

interface TaskApp {
  name: string
  icon: ReactNode
  state?: 'open' | 'stack' | 'front'
}

const APPS: TaskApp[] = [
  { name: 'Opera', icon: <OperaIcon /> },
  { name: 'Chrome', icon: <ChromeIcon />, state: 'open' },
  { name: 'Explorador', icon: <ExplorerIcon />, state: 'stack' },
  { name: 'Reproductor', icon: <MediaPlayerIcon /> },
  { name: 'Internet Explorer', icon: <ExplorerEIcon /> },
  { name: 'Firefox', icon: <FirefoxIcon /> },
  { name: 'WinRAR', icon: <WinrarIcon /> },
  { name: 'OBS', icon: <ObsIcon />, state: 'open' },
  { name: 'Paint', icon: <PaintIcon /> },
  { name: 'Word', icon: <OfficeIcon letter="W" dark="#1f5cae" light="#c5daf3" /> },
  { name: 'Movie Maker', icon: <MovieIcon />, state: 'open' },
  { name: 'Excel', icon: <OfficeIcon letter="X" dark="#2f8f34" light="#b5dfa8" />, state: 'front' },
]

function TaskButton({ app }: { app: TaskApp }) {
  const stacked = app.state === 'stack' || app.state === 'front'
  return (
    <div className="flex h-full w-[58px] shrink-0 items-center pl-[2px]">
      <button
        aria-label={app.name}
        className={clsx(
          'flex h-[36px] items-center justify-center rounded-[3px] border',
          stacked ? 'w-[49px]' : 'w-[55px]',
          !app.state && 'border-transparent',
          (app.state === 'open' || app.state === 'stack') && 'border-[#7b7f84] bg-linear-to-b from-[#55585c] to-[#202428]',
          app.state === 'front' && 'border-[#c5c8ca] bg-linear-to-b from-[#8f9293] to-[#696c6e]',
        )}
      >
        {app.icon}
      </button>
      {stacked && <span className="h-[34px] w-[3px] rounded-r-[3px] border-r border-[#8a8e92] bg-[#34383c]" />}
      {app.state === 'stack' && <span className="h-[34px] w-[3px] rounded-r-[3px] border-r border-[#5a5e62] bg-[#1c2024]" />}
    </div>
  )
}

function Taskbar() {
  return (
    <div className="flex h-[38px] shrink-0 items-center border-t border-[#3a4048] bg-[#05090f] text-white">
      <button aria-label="Inicio" className="flex w-[56px] shrink-0 justify-center pr-[2px]">
        <WindowsOrb />
      </button>
      {APPS.map(app => (
        <TaskButton key={app.name} app={app} />
      ))}

      <div className="ml-auto flex h-full items-center">
        <span className="w-[28px] pb-[5px]">ES</span>
        <button aria-label="Mostrar iconos ocultos" className="w-[19px]">
          <svg width="7" height="4" viewBox="0 0 7 4">
            <path d="M0 4h7L3.500 0z" fill="#fff" />
          </svg>
        </button>
        <svg width="16" height="16" viewBox="0 0 16 16">
          <circle cx="8" cy="8" r="7.500" fill="#f5a11c" />
          <circle cx="8" cy="8" r="3.200" fill="none" stroke="#fff" strokeWidth="2" />
          <path d="M11.500 5v6.500" stroke="#fff" strokeWidth="1.800" />
        </svg>
        <svg width="15" height="15" viewBox="0 0 15 15" className="ml-[8px]">
          <path d="M4.500 3.500h9v7h-9zM9 11v2M6 13.500h7" stroke="#e8eaec" strokeWidth="1.400" fill="none" />
          <path d="M1 1h4v3H1zM3 4v7" stroke="#e8eaec" fill="#889" />
        </svg>
        <svg width="16" height="14" viewBox="0 0 16 14" className="ml-[7px]">
          <path d="M1 5h2l4-4v12L3 9H1z" fill="#fff" />
          <path d="M9 5q1 2 0 4M11 3.500q2 3.500 0 7M13 2q3 5 0 10" stroke="#c9ccd0" fill="none" />
        </svg>
        <div className="ml-[8px] w-[69px] text-center leading-[15px]">
          <div>04:40 p.m.</div>
          <div>05/12/2016</div>
        </div>
        <button aria-label="Mostrar escritorio" className="ml-[5px] h-full w-[11px] border border-[#4a5058] bg-linear-to-b from-[#3a4047] to-[#0a0e14]" />
        <span className="w-[3px]" />
      </div>
    </div>
  )
}

export default function App() {
  return (
    <div className="flex h-screen flex-col overflow-hidden bg-black font-[Roboto,sans-serif] text-[11px] leading-[16px]">
      <main className="mr-[2px] ml-[2px] flex min-h-0 flex-1 flex-col bg-[#cfd4db]">
        <TitleBar />
        <MenuTabs />
        <Ribbon />
        <FormulaBar />
        <div className="flex min-h-0 flex-1">
          <Sheet />
          <VerticalScroll />
          <span className="w-[4px] shrink-0 bg-[#e3e6eb]" />
        </div>
        <SheetTabs />
        <StatusBar />
      </main>
      <Taskbar />
    </div>
  )
}
